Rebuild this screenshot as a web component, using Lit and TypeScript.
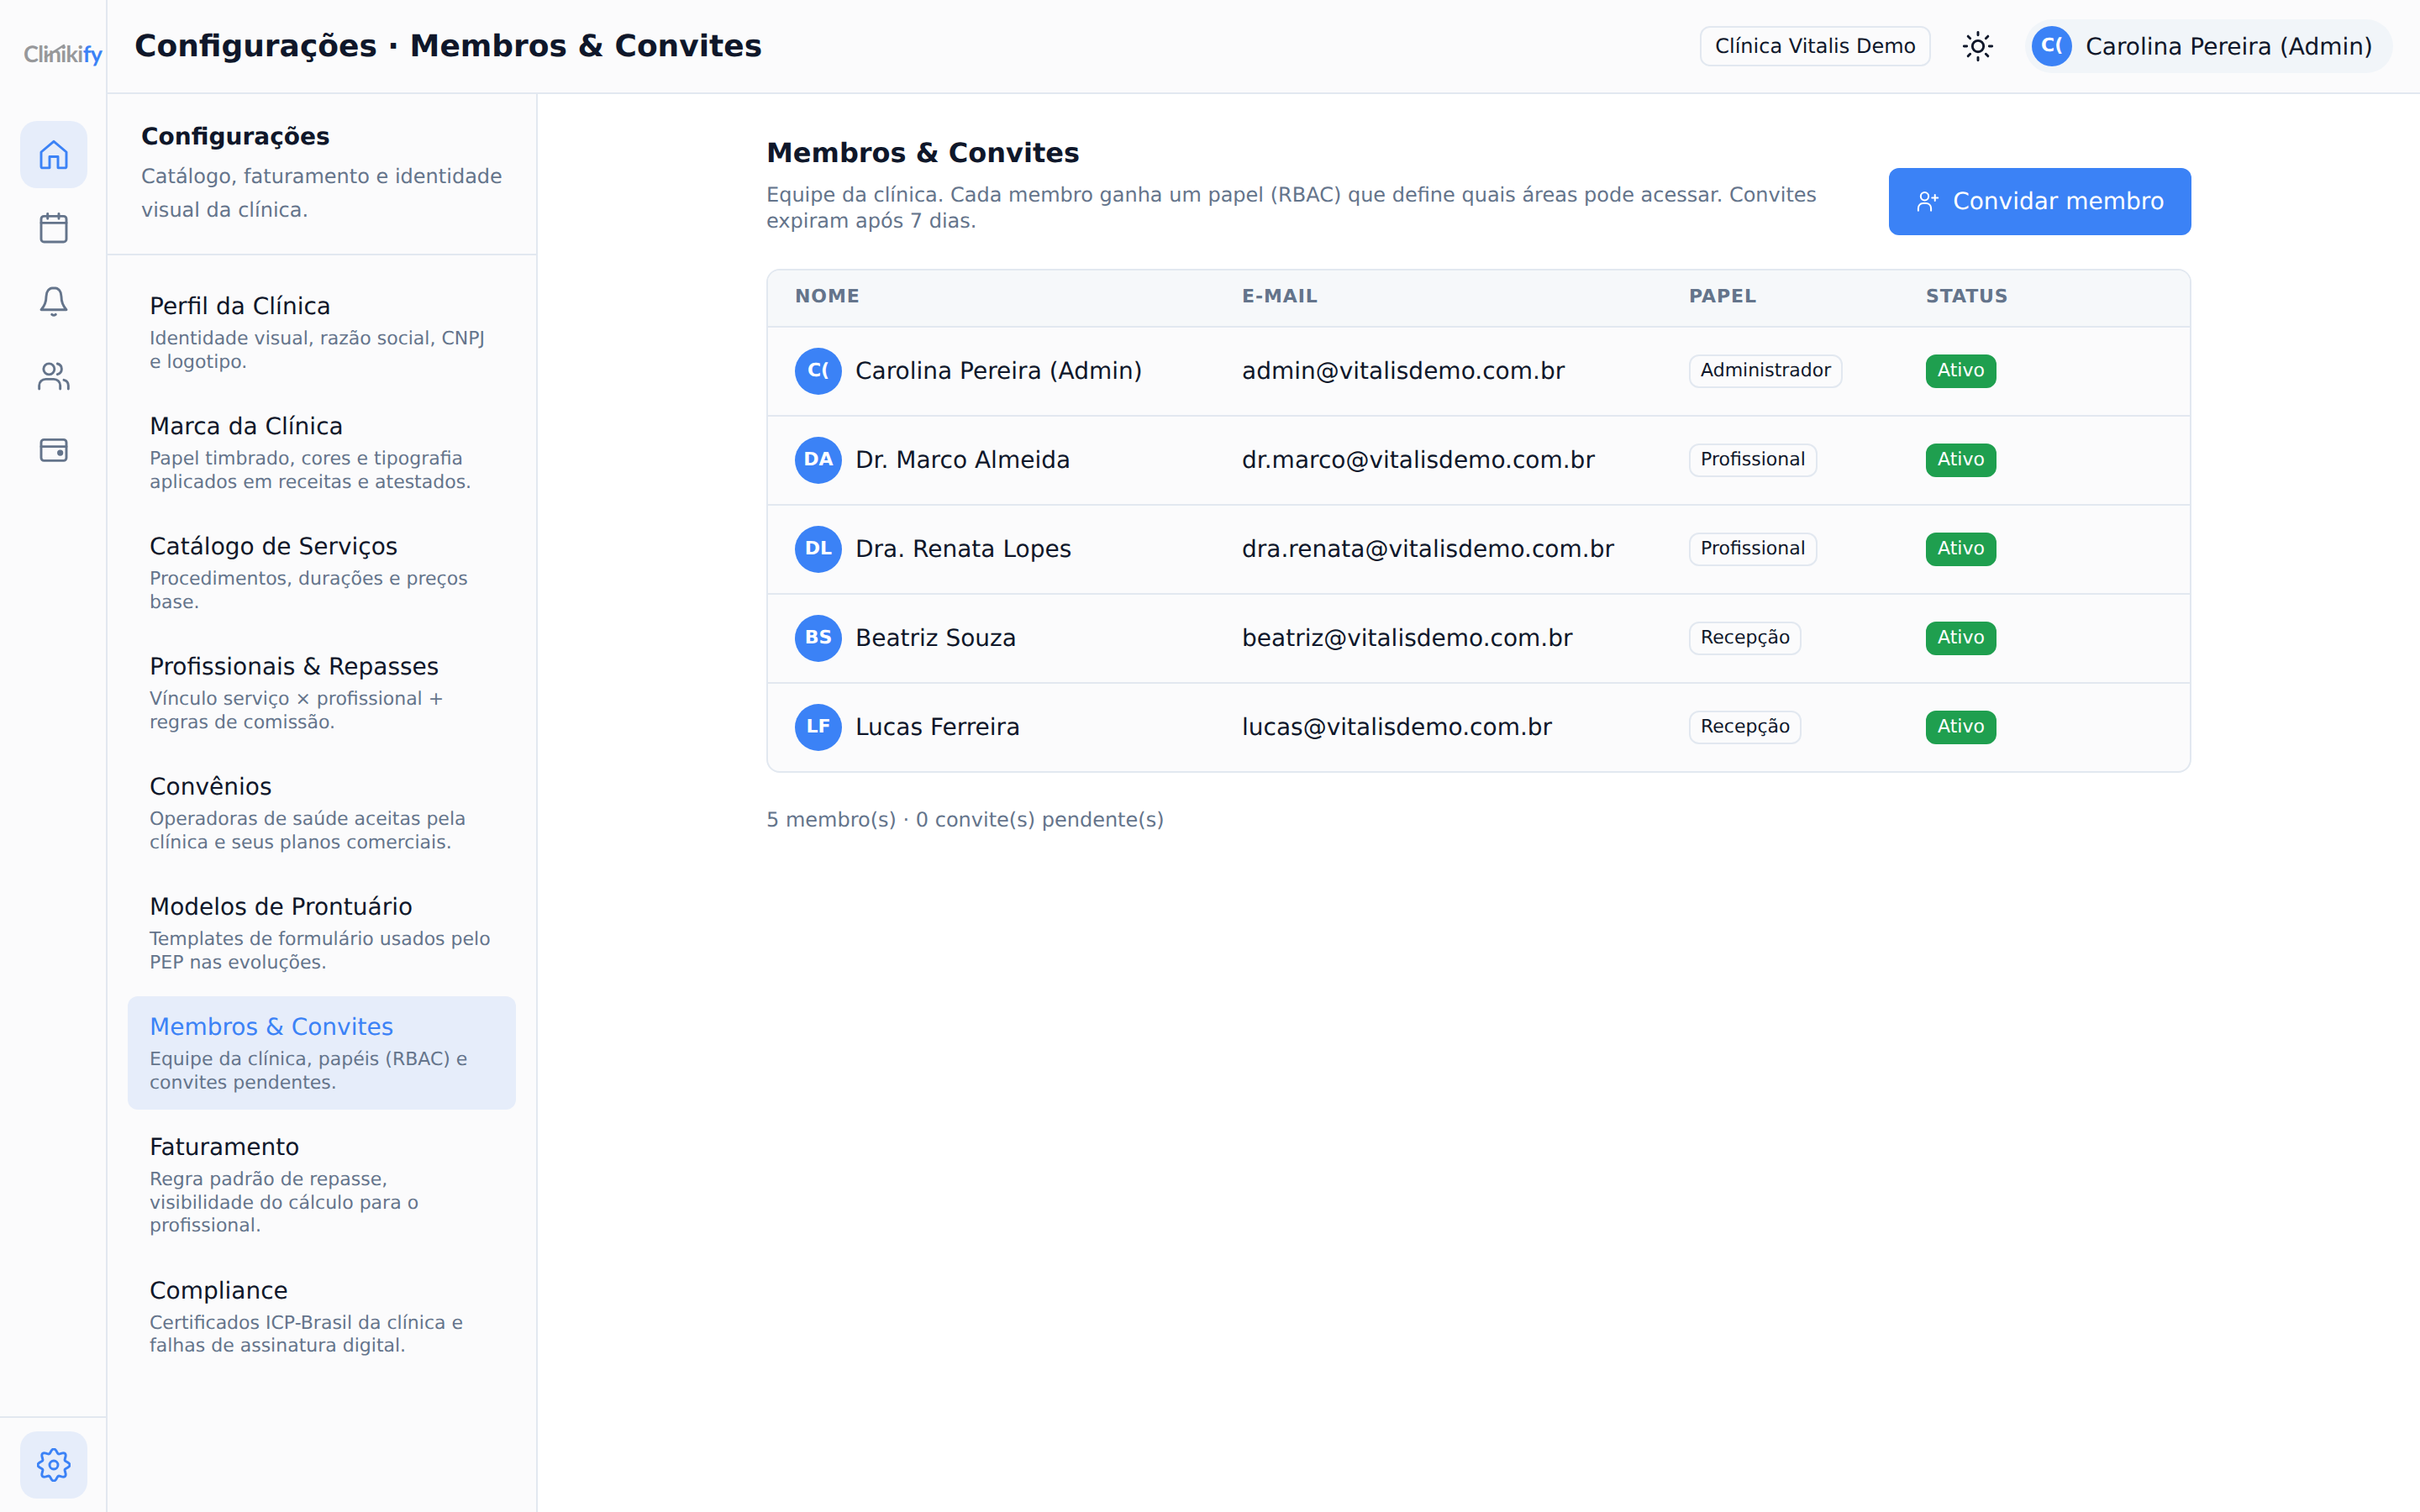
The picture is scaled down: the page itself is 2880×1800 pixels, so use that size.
import { LitElement, html, css, svg } from 'lit';
import { customElement } from 'lit/decorators.js';

const navItems = [
  { title: 'Perfil da Clínica', sub: 'Identidade visual, razão social, CNPJ e logotipo.' },
  { title: 'Marca da Clínica', sub: 'Papel timbrado, cores e tipografia aplicados em receitas e atestados.' },
  { title: 'Catálogo de Serviços', sub: 'Procedimentos, durações e preços base.' },
  { title: 'Profissionais & Repasses', sub: 'Vínculo serviço × profissional + regras de comissão.' },
  { title: 'Convênios', sub: 'Operadoras de saúde aceitas pela clínica e seus planos comerciais.' },
  { title: 'Modelos de Prontuário', sub: 'Templates de formulário usados pelo PEP nas evoluções.' },
  { title: 'Membros & Convites', sub: 'Equipe da clínica, papéis (RBAC) e convites pendentes.', active: true },
  { title: 'Faturamento', sub: 'Regra padrão de repasse, visibilidade do cálculo para o profissional.' },
  { title: 'Compliance', sub: 'Certificados ICP-Brasil da clínica e falhas de assinatura digital.' },
];

const members = [
  { initials: 'C(', name: 'Carolina Pereira (Admin)', email: 'admin@vitalisdemo.com.br', role: 'Administrador' },
  { initials: 'DA', name: 'Dr. Marco Almeida', email: 'dr.marco@vitalisdemo.com.br', role: 'Profissional' },
  { initials: 'DL', name: 'Dra. Renata Lopes', email: 'dra.renata@vitalisdemo.com.br', role: 'Profissional' },
  { initials: 'BS', name: 'Beatriz Souza', email: 'beatriz@vitalisdemo.com.br', role: 'Recepção' },
  { initials: 'LF', name: 'Lucas Ferreira', email: 'lucas@vitalisdemo.com.br', role: 'Recepção' },
];

// wavy 8 lobe outline for the settings gear
function gearPath() {
  const pts: string[] = [];
  for (let i = 0; i < 96; i++) {
    const a = (i / 96) * Math.PI * 2;
    const r = 10 + 1.45 * Math.cos(8 * a);
    pts.push(`${(12 + r * Math.sin(a)).toFixed(2)} ${(12 - r * Math.cos(a)).toFixed(2)}`);
  }
  return `M${pts.join('L')}Z`;
}

const railIcons = [
  svg`<path d="M3 10.2 12 2.6l9 7.6v10.3a1 1 0 0 1-1 1h-5v-8H9v8H4a1 1 0 0 1-1-1z"/>`,
  svg`<rect x="3" y="3.2" width="18" height="18.4" rx="2"/><path d="M3 8h18M7.6 1.4v3.6M15.6 1.4v3.6"/>`,
  svg`<path d="M12 1.6c-3.6 0-5.4 2.6-5.4 6.2 0 4-1.4 7-3.6 9.4h18c-2.2-2.4-3.6-5.4-3.6-9.4 0-3.6-1.8-6.2-5.4-6.2z"/><path d="M10.6 20.6q1.4 1.2 2.8 0"/>`,
  svg`<circle cx="8.6" cy="6.8" r="3.9"/><path d="M14.6 3a3.9 3.9 0 0 1 0 7.6M1.6 21v-2.4a4.6 4.6 0 0 1 4.6-4.6h5.8a4.6 4.6 0 0 1 4.6 4.6V21M19.2 14.6a4.2 4.2 0 0 1 3.2 4V21"/>`,
  svg`<rect x="3" y="4.4" width="18" height="15" rx="2"/><path d="M3 9.4h18"/><circle cx="16.6" cy="13.8" r="1.3" fill="currentColor"/>`,
];

@customElement('app-root')
export class AppRoot extends LitElement {
  static styles = css`
    :host {
      display: flex;
      height: 100vh;
      background: #ffffff;
      color: #0f172a;
      font-family: "DejaVu Sans", sans-serif;
      text-rendering: geometricPrecision;
      overflow: hidden;
    }
    svg {
      display: block;
      fill: none;
      stroke: currentColor;
      stroke-width: 1.75;
      stroke-linecap: round;
      stroke-linejoin: round;
      flex: none;
    }

    .rail {
      width: 128px;
      flex: none;
      box-sizing: border-box;
      border-right: 2px solid #e2e8f0;
      background: #fbfbfc;
      display: flex;
      flex-direction: column;
    }
    .logo {
      height: 112px;
      flex: none;
      box-sizing: border-box;
      padding: 14px 0 0 28px;
      display: flex;
      align-items: center;
      font-family: "Lato", sans-serif;
      font-size: 27px;
      font-weight: 700;
      letter-spacing: -0.6px;
      color: #97989a;
    }
    .logo b { font-weight: 700; color: #3b82f6; }
    .logo-mark { position: relative; }
    .logo-mark svg { position: absolute; left: 24px; top: 4px; stroke-width: 2.5; color: #97989a; }
    .rail-top {
      flex: 1;
      display: flex;
      flex-direction: column;
      align-items: center;
      gap: 8px;
      padding: 32px 0 0 2px;
    }
    .rail-bottom {
      border-top: 2px solid #e2e8f0;
      padding: 16px 0 16px 2px;
      display: flex;
      justify-content: center;
    }
    .rail-btn {
      width: 80px;
      height: 80px;
      border-radius: 20px;
      display: flex;
      align-items: center;
      justify-content: center;
      color: #64748b;
    }
    .rail-btn.on { background: #e6edfa; color: #3b82f6; }

    .right { flex: 1; min-width: 0; display: flex; flex-direction: column; }
    .top {
      height: 112px;
      flex: none;
      box-sizing: border-box;
      border-bottom: 2px solid #e2e8f0;
      background: #fbfbfc;
      padding: 0 32px;
      display: flex;
      align-items: center;
      gap: 24px;
    }
    .top h1 { margin: 0 auto 0 0; font-size: 36px; font-weight: 700; }
    .chip {
      height: 48px;
      box-sizing: border-box;
      border: 2px solid #e2e8f0;
      border-radius: 12px;
      padding: 0 16px;
      display: flex;
      align-items: center;
      font-size: 24px;
    }
    .sun { margin: 0 12px 0 12px; }
    .user {
      height: 64px;
      border-radius: 32px;
      background: #f1f5f9;
      padding: 0 24px 0 8px;
      display: flex;
      align-items: center;
      gap: 16px;
      font-size: 28px;
    }
    .avatar {
      box-sizing: border-box;
      padding-bottom: 2px;
      border-radius: 50%;
      background: #3b82f6;
      color: #ffffff;
      font-weight: 700;
      display: flex;
      align-items: center;
      justify-content: center;
      flex: none;
    }
    .user .avatar { width: 48px; height: 48px; font-size: 22px; }

    .body { flex: 1; min-height: 0; display: flex; }
    .side {
      width: 512px;
      flex: none;
      box-sizing: border-box;
      border-right: 2px solid #e2e8f0;
      background: #fbfbfc;
    }
    .side-head {
      height: 192px;
      box-sizing: border-box;
      border-bottom: 2px solid #e2e8f0;
      padding: 31px 24px 0 40px;
    }
    .side-head h2 { margin: 0 0 8px; font-size: 28px; line-height: 40px; font-weight: 700; }
    .side-head p { margin: 0; font-size: 24px; line-height: 39.5px; color: #64748b; }
    .nav { padding: 24px 24px 0; display: flex; flex-direction: column; gap: 8px; }
    .item { border-radius: 12px; padding: 17px 26px 18px; }
    .item .t { font-size: 28px; line-height: 40px; margin-bottom: 5px; }
    .item .s { font-size: 22px; line-height: 27.5px; color: #64748b; }
    .item.on { background: #e6edfa; }
    .item.on .t { color: #3b82f6; }

    .main { flex: 1; min-width: 0; padding: 48px 0 0; display: flex; justify-content: center; }
    .wrap { width: 1696px; }
    .page-head { display: flex; align-items: flex-end; gap: 40px; margin-bottom: 40px; }
    .intro { flex: 1; padding-bottom: 1px; }
    .intro h2 { margin: 0 0 12px; font-size: 32px; line-height: 45px; font-weight: 700; }
    .intro p { margin: 0; font-size: 24px; line-height: 31px; color: #64748b; }
    .invite {
      width: 360px;
      height: 80px;
      flex: none;
      box-sizing: border-box;
      padding-bottom: 2px;
      border-radius: 12px;
      background: #3b82f6;
      color: #ffffff;
      font-size: 28px;
      display: flex;
      align-items: center;
      justify-content: center;
      gap: 16px;
    }

    .table {
      border: 2px solid #e2e8f0;
      border-radius: 16px;
      overflow: hidden;
      background: #fbfbfc;
    }
    .row {
      display: grid;
      grid-template-columns: 532px 532px 282px 1fr;
      align-items: center;
      height: 104px;
      border-top: 2px solid #e2e8f0;
      padding-left: 32px;
      font-size: 28px;
    }
    .row > * { min-width: 0; }
    .row .text { padding-bottom: 2px; }
    .row.head {
      height: 66px;
      border-top: 0;
      padding-bottom: 3px;
      box-sizing: border-box;
      background: #f6f8fa;
      font-size: 22px;
      font-weight: 700;
      letter-spacing: 0.9px;
      color: #64748b;
    }
    .person { display: flex; align-items: center; gap: 16px; }
    .person .avatar { width: 56px; height: 56px; font-size: 22px; }
    .badge {
      display: inline-flex;
      align-items: center;
      height: 40px;
      box-sizing: border-box;
      padding: 0 12px 2px;
      border: 2px solid #e2e8f0;
      border-radius: 12px;
      font-size: 22px;
    }
    .badge.green { background: #1f9f4f; border-color: #1f9f4f; color: #ffffff; }
    .count { margin: 42px 0 0; font-size: 24px; color: #64748b; }
  `;

  render() {
    return html`
      <aside class="rail">
        <div class="logo">
          <span class="logo-mark">Clinik<span>i</span><b>fy</b>
            <svg width="28" height="20" viewBox="0 0 28 20"><path d="M2 17 24 3"/></svg>
          </span>
        </div>
        <div class="rail-top">
          ${railIcons.map((icon, i) => html`
            <div class="rail-btn ${i === 0 ? 'on' : ''}">
              <svg width="40" height="40" viewBox="0 0 24 24">${icon}</svg>
            </div>`)}
        </div>
        <div class="rail-bottom">
          <div class="rail-btn on">
            <svg width="40" height="40" viewBox="0 0 24 24">
              <path d=${gearPath()}/><circle cx="12" cy="12" r="3"/>
            </svg>
          </div>
        </div>
      </aside>
      <div class="right">
        <header class="top">
          <h1>Configurações · Membros &amp; Convites</h1>
          <div class="chip">Clínica Vitalis Demo</div>
          <svg class="sun" width="40" height="40" viewBox="0 0 24 24">
            <circle cx="12" cy="12" r="4"/>
            <path d="M12 2v2M12 20v2M4.9 4.9l1.5 1.5M17.6 17.6l1.5 1.5M2 12h2M20 12h2M6.4 17.6l-1.5 1.5M19.1 4.9l-1.5 1.5"/>
          </svg>
          <div class="user"><span class="avatar">C(</span>Carolina Pereira (Admin)</div>
        </header>
        <div class="body">
          <nav class="side">
            <div class="side-head">
              <h2>Configurações</h2>
              <p>Catálogo, faturamento e identidade visual da clínica.</p>
            </div>
            <div class="nav">
              ${navItems.map(n => html`
                <div class="item ${n.active ? 'on' : ''}">
                  <div class="t">${n.title}</div>
                  <div class="s">${n.sub}</div>
                </div>`)}
            </div>
          </nav>
          <main class="main">
            <div class="wrap">
              <div class="page-head">
                <div class="intro">
                  <h2>Membros &amp; Convites</h2>
                  <p>Equipe da clínica. Cada membro ganha um papel (RBAC) que define quais áreas pode acessar. Convites expiram após 7 dias.</p>
                </div>
                <div class="invite">
                  <svg width="28" height="28" viewBox="0 0 24 24">
                    <circle cx="9" cy="7.5" r="4"/>
                    <path d="M2.5 22v-2.5a5 5 0 0 1 5-5h3a5 5 0 0 1 5 5V22M19.5 6v6M16.5 9h6"/>
                  </svg>
                  Convidar membro
                </div>
              </div>
              <div class="table">
                <div class="row head"><span>NOME</span><span>E-MAIL</span><span>PAPEL</span><span>STATUS</span></div>
                ${members.map(m => html`
                  <div class="row">
                    <div class="person"><span class="avatar">${m.initials}</span><span class="text">${m.name}</span></div>
                    <div class="text">${m.email}</div>
                    <div><span class="badge">${m.role}</span></div>
                    <div><span class="badge green">Ativo</span></div>
                  </div>`)}
              </div>
              <p class="count">5 membro(s) · 0 convite(s) pendente(s)</p>
            </div>
          </main>
        </div>
      </div>
    `;
  }
}
